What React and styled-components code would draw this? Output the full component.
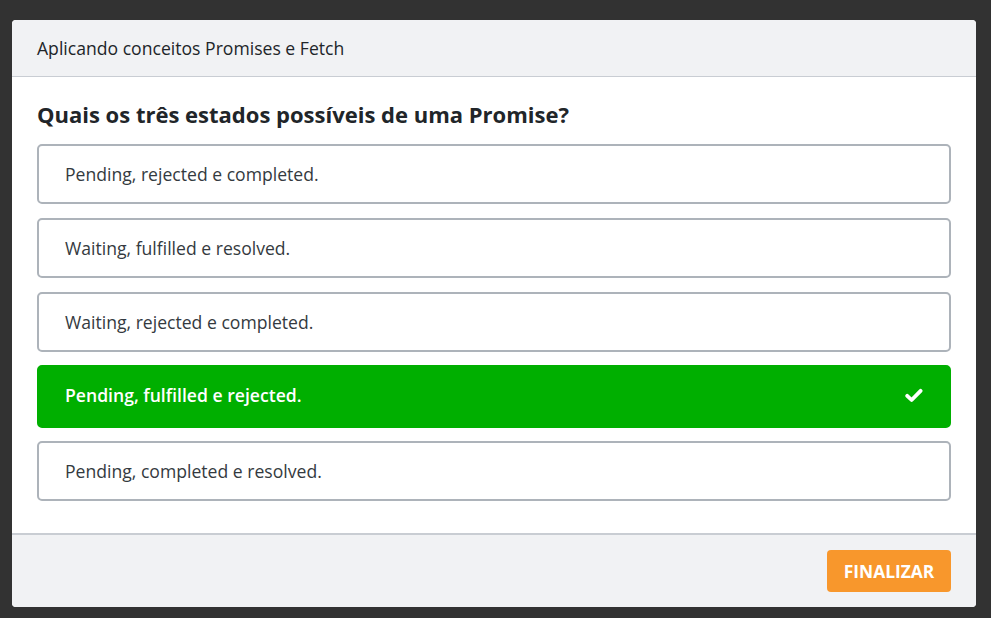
import React from "react";
import styled, { createGlobalStyle } from "styled-components";

const Global = createGlobalStyle`
  html, body { margin: 0; padding: 0; background: #323232; }
  body { font-family: "Open Sans", "Liberation Sans", sans-serif; }
  * { box-sizing: border-box; }
`;

const Page = styled.div`
  padding: 20px 15px 11px 12px;
  min-height: 618px;
`;

const Card = styled.div`
  background: #fff;
  border-radius: 4px;
  overflow: hidden;
  display: flex;
  flex-direction: column;
`;

const Header = styled.div`
  height: 57px;
  background: #f1f2f4;
  border-bottom: 1px solid #c9cdd3;
  display: flex;
  align-items: center;
  padding: 0 25px;
  font-size: 17.6px;
  color: #212529;
`;

const Body = styled.div`
  padding: 23px 25px 32px;
  display: flex;
  flex-direction: column;
`;

const Question = styled.h2`
  margin: 0 0 15px;
  font-size: 22px;
  font-weight: 700;
  line-height: 29px;
  color: #212529;
`;

const Options = styled.div`
  display: flex;
  flex-direction: column;
  gap: 14px;
`;

const Option = styled.div`
  height: ${(p) => (p.$correct ? "63px" : "60px")};
  margin: ${(p) => (p.$correct ? "-1px 0" : "0")};
  border-radius: 5px;
  border: 2px solid ${(p) => (p.$correct ? "#00af00" : "#adb3ba")};
  background: ${(p) => (p.$correct ? "#00af00" : "#fff")};
  color: ${(p) => (p.$correct ? "#fff" : "#343a40")};
  font-weight: ${(p) => (p.$correct ? 600 : 400)};
  font-size: 17.6px;
  display: flex;
  align-items: center;
  justify-content: space-between;
  padding: 0 26px ${(p) => (p.$correct ? "3px" : "0")} 26px;
`;

const Footer = styled.div`
  background: #f1f2f4;
  border-top: 2px solid #c9cdd3;
  display: flex;
  justify-content: flex-end;
  padding: 15px 25px 15px;
`;

const Button = styled.button`
  height: 42px;
  width: 124px;
  border: none;
  border-radius: 4px;
  background: #f8972c;
  color: #fff;
  font-family: "Open Sans", "Liberation Sans", sans-serif;
  font-weight: 700;
  font-size: 17.4px;
  cursor: pointer;
`;

const Check = () => (
  <svg width="18" height="15" viewBox="0 0 18 15" aria-hidden="true">
    <path d="M2.2 7.8 L6.6 12 L15.6 2.8" fill="none" stroke="#fff" strokeWidth="3.8" strokeLinecap="round" strokeLinejoin="round" />
  </svg>
);

const options = [
  { text: "Pending, rejected e completed." },
  { text: "Waiting, fulfilled e resolved." },
  { text: "Waiting, rejected e completed." },
  { text: "Pending, fulfilled e rejected.", correct: true },
  { text: "Pending, completed e resolved." },
];

export default function App() {
  return (
    <>
      <Global />
      <Page>
        <Card>
          <Header>Aplicando conceitos Promises e Fetch</Header>
          <Body>
            <Question>Quais os três estados possíveis de uma Promise?</Question>
            <Options>
              {options.map((o) => (
                <Option key={o.text} $correct={o.correct}>
                  <span>{o.text}</span>
                  {o.correct && <Check />}
                </Option>
              ))}
            </Options>
          </Body>
          <Footer>
            <Button>FINALIZAR</Button>
          </Footer>
        </Card>
      </Page>
    </>
  );
}
